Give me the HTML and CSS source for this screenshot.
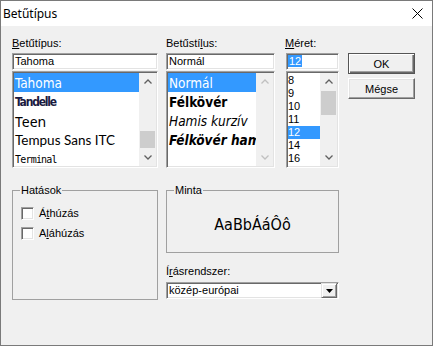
FILE: index.html
```html
<!DOCTYPE html>
<html lang="hu">
    <head>
        <meta charset="UTF-8">
        <title>Betűtípus</title>
        <link rel="stylesheet" href="styles.css">
    </head>

    <body>
        <div class="dialog">
            <div class="titlebar">
                <span class="title">Betűtípus</span>
                <svg class="close" width="11" height="11" viewBox="0 0 11 11">
                    <path d="M0.5 0.5 L10.5 10.5 M10.5 0.5 L0.5 10.5" stroke="#000" stroke-width="1" fill="none"/>
                </svg>
            </div>

            <div class="content">
                <div class="top">
                    <!-- font family -->
                    <div class="col-font">
                        <label class="lbl"><u>B</u>etűtípus:</label>
                        <div class="field">Tahoma</div>
                        <div class="listbox">
                            <ul class="items">
                                <li class="sel f-tahoma">Tahoma</li>
                                <li class="f-tandelle">Tandelle</li>
                                <li class="f-teen">Teen</li>
                                <li class="f-tempus">Tempus Sans ITC</li>
                                <li class="f-terminal">Terminal</li>
                            </ul>
                            <div class="sb">
                                <div class="sb-btn"><svg width="8" height="5" viewBox="0 0 8 5"><polyline points="0.5,4.5 4,1 7.5,4.5"/></svg></div>
                                <div class="sb-track"><div class="thumb thumb-font"></div></div>
                                <div class="sb-btn"><svg width="8" height="5" viewBox="0 0 8 5"><polyline points="0.5,0.5 4,4 7.5,0.5"/></svg></div>
                            </div>
                        </div>
                    </div>

                    <!-- font style -->
                    <div class="col-style">
                        <label class="lbl">Betűstí<u>l</u>us:</label>
                        <div class="field">Normál</div>
                        <div class="listbox">
                            <ul class="items">
                                <li class="sel f-tahoma">Normál</li>
                                <li class="f-tahoma bold">Félkövér</li>
                                <li class="f-tahoma italic">Hamis kurzív</li>
                                <li class="f-tahoma bold italic">Félkövér hamis kurzív</li>
                            </ul>
                            <div class="sb sb-off">
                                <div class="sb-btn"><svg width="8" height="5" viewBox="0 0 8 5"><polyline points="0.5,4.5 4,1 7.5,4.5"/></svg></div>
                                <div class="sb-track"></div>
                                <div class="sb-btn"><svg width="8" height="5" viewBox="0 0 8 5"><polyline points="0.5,0.5 4,4 7.5,0.5"/></svg></div>
                            </div>
                        </div>
                    </div>

                    <!-- size -->
                    <div class="col-size">
                        <label class="lbl"><u>M</u>éret:</label>
                        <div class="field"><span class="pick">12</span></div>
                        <div class="listbox">
                            <ul class="items sizes">
                                <li>8</li>
                                <li>9</li>
                                <li>10</li>
                                <li>11</li>
                                <li class="sel">12</li>
                                <li>14</li>
                                <li>16</li>
                            </ul>
                            <div class="sb">
                                <div class="sb-btn"><svg width="8" height="5" viewBox="0 0 8 5"><polyline points="0.5,4.5 4,1 7.5,4.5"/></svg></div>
                                <div class="sb-track"><div class="thumb thumb-size"></div></div>
                                <div class="sb-btn"><svg width="8" height="5" viewBox="0 0 8 5"><polyline points="0.5,0.5 4,4 7.5,0.5"/></svg></div>
                            </div>
                        </div>
                    </div>

                    <div class="buttons">
                        <button class="btn btn-default">OK</button>
                        <button class="btn">Mégse</button>
                    </div>
                </div>

                <div class="bottom">
                    <fieldset class="group effects">
                        <legend>Hatások</legend>
                        <div class="check"><span class="box"></span>Á<u>t</u>húzás</div>
                        <div class="check"><span class="box"></span>A<u>l</u>áhúzás</div>
                    </fieldset>

                    <div class="col-sample">
                        <fieldset class="group sample">
                            <legend>Minta</legend>
                            <div class="sample-text">AaBbÁáÔô</div>
                        </fieldset>
                        <label class="lbl script-lbl">Í<u>r</u>ásrendszer:</label>
                        <div class="combo">
                            <span class="combo-text">közép-európai</span>
                            <span class="combo-btn">
                                <svg width="7" height="4" viewBox="0 0 7 4"><polygon points="0,0 7,0 3.5,4" fill="#000"/></svg>
                            </span>
                        </div>
                    </div>
                </div>
            </div>
        </div>
    </body>
</html>
```

FILE: styles.css
```css
body {
    margin: 0;
    background-color: #fff;
}

.dialog {
    width: 433px;
    height: 346px;
    box-sizing: border-box;
    border: 1px solid #7a7a7a;
    display: flex;
    flex-direction: column;
    font-family: "Liberation Sans", Arial, sans-serif;
    font-size: 11px;
    color: #000;
}

.titlebar {
    height: 25px;
    flex: none;
    background-color: #fff;
    display: flex;
    align-items: center;
    justify-content: space-between;
    padding: 0 9px 0 2px;
}

.title {
    font-family: "Noto Sans", sans-serif;
    font-size: 12px;
}

.content {
    flex: 1;
    background-color: #f0f0f0;
    padding: 10px 0 0 11px;
}

.top {
    display: flex;
    align-items: flex-start;
}

.col-font {
    width: 146px;
}

.col-style {
    width: 109px;
    margin-left: 8px;
}

.col-size {
    width: 53px;
    margin-left: 11px;
}

.col-size .lbl {
    margin-left: -1px;
}

.lbl {
    display: block;
    height: 17px;
    line-height: 14px;
    white-space: nowrap;
}

/* sunken 3d edge used by text fields, lists, checkboxes */
.field,
.listbox,
.combo,
.box {
    box-sizing: border-box;
    background-color: #fff;
    border: 1px solid;
    border-color: #a0a0a0 #fff #fff #a0a0a0;
    box-shadow: inset 1px 1px #696969, inset -1px -1px #e3e3e3;
}

.field {
    height: 17px;
    padding: 1px 2px;
    line-height: 13px;
    white-space: nowrap;
    overflow: hidden;
}

.pick {
    background-color: #3399ff;
    color: #fff;
    padding: 0 1px;
    margin-left: -1px;
}

.listbox {
    margin-top: 1px;
    height: 97px;
    padding: 1px;
    display: flex;
}

.items {
    list-style: none;
    margin: 0;
    padding: 0;
    flex: 1;
    min-width: 0;
    overflow: hidden;
}

.items li {
    height: 17px;
    padding: 2px 0 0 1px;
    line-height: 17px;
    white-space: nowrap;
    overflow: hidden;
}

.items li.sel {
    background-color: #3399ff;
    color: #fff;
}

.f-tahoma {
    font-family: "DejaVu Sans Condensed", "DejaVu Sans", sans-serif;
    font-stretch: condensed;
    font-size: 13.5px;
}

.bold {
    font-weight: bold;
}

.italic {
    font-style: italic;
}

.f-tandelle {
    font-family: "DejaVu Sans Condensed", "DejaVu Sans", sans-serif;
    font-stretch: condensed;
    font-weight: bold;
    font-size: 12px;
    letter-spacing: -1.2px;
    color: #1a1a40;
}

.f-teen {
    font-family: "Noto Sans", sans-serif;
    font-size: 14px;
}

.f-tempus {
    font-family: "Lato", sans-serif;
    font-size: 13.5px;
}

.f-terminal {
    font-family: "DejaVu Sans Mono", monospace;
    font-size: 10px;
    letter-spacing: -0.8px;
}

.sizes {
    padding-top: 1px;
}

.sizes li {
    height: 13px;
    padding: 0;
    line-height: 13px;
}

/* windows style scrollbar */
.sb {
    width: 17px;
    flex: none;
    display: flex;
    flex-direction: column;
    background-color: #f0f0f0;
}

.sb-btn {
    height: 17px;
    display: flex;
    align-items: center;
    justify-content: center;
}

.sb-btn polyline {
    fill: none;
    stroke: #606060;
    stroke-width: 1.3;
}

.sb-off .sb-btn polyline {
    stroke: #c0c0c0;
}

.sb-track {
    flex: 1;
}

.thumb {
    margin: 0 1px;
    background-color: #cdcdcd;
}

.thumb-font {
    margin-top: 41px;
    height: 17px;
}

.thumb-size {
    margin-top: 1px;
    height: 24px;
}

.buttons {
    width: 67px;
    margin-left: 9px;
    padding-top: 17px;
    display: flex;
    flex-direction: column;
    gap: 4px;
}

.btn {
    height: 21px;
    box-sizing: border-box;
    padding: 0;
    background-color: #f0f0f0;
    font-family: "Liberation Sans", Arial, sans-serif;
    font-size: 11px;
    color: #000;
    border: 1px solid;
    border-color: #fff #696969 #696969 #fff;
    box-shadow: inset -1px -1px #a0a0a0, inset 1px 1px #e3e3e3;
}

.btn-default {
    border: 1px solid #555;
    box-shadow: inset 1px 1px #fff, inset -1px -1px #696969, inset -2px -2px #a0a0a0;
}

.bottom {
    display: flex;
    margin-top: 16px;
}

.group {
    margin: 0;
    padding: 7px 8px 0 8px;
    border: 1px solid #a0a0a0;
    box-sizing: border-box;
    min-width: 0;
}

.group legend {
    padding: 0 1px;
    margin-left: -1px;
    line-height: 12px;
}

.effects {
    width: 146px;
    height: 116px;
}

.check {
    display: flex;
    align-items: center;
    height: 20px;
}

.box {
    width: 13px;
    height: 13px;
    margin-right: 5px;
}

.col-sample {
    width: 173px;
    margin-left: 8px;
}

.sample {
    height: 69px;
    padding-top: 0;
}

.sample-text {
    padding-top: 19px;
    line-height: 20px;
    text-align: center;
    font-family: "DejaVu Sans Condensed", "DejaVu Sans", sans-serif;
    font-stretch: condensed;
    font-size: 16px;
}

.script-lbl {
    margin-top: 11px;
    height: 18px;
}

.combo {
    height: 17px;
    padding: 1px;
    display: flex;
    align-items: stretch;
}

.combo-text {
    flex: 1;
    padding-left: 1px;
    line-height: 13px;
}

.combo-btn {
    width: 16px;
    box-sizing: border-box;
    display: flex;
    align-items: center;
    justify-content: center;
    background-color: #f0f0f0;
    border: 1px solid;
    border-color: #e3e3e3 #696969 #696969 #e3e3e3;
    box-shadow: inset 1px 1px #fff, inset -1px -1px #a0a0a0;
    margin: -1px 0 -1px 0;
}
```
